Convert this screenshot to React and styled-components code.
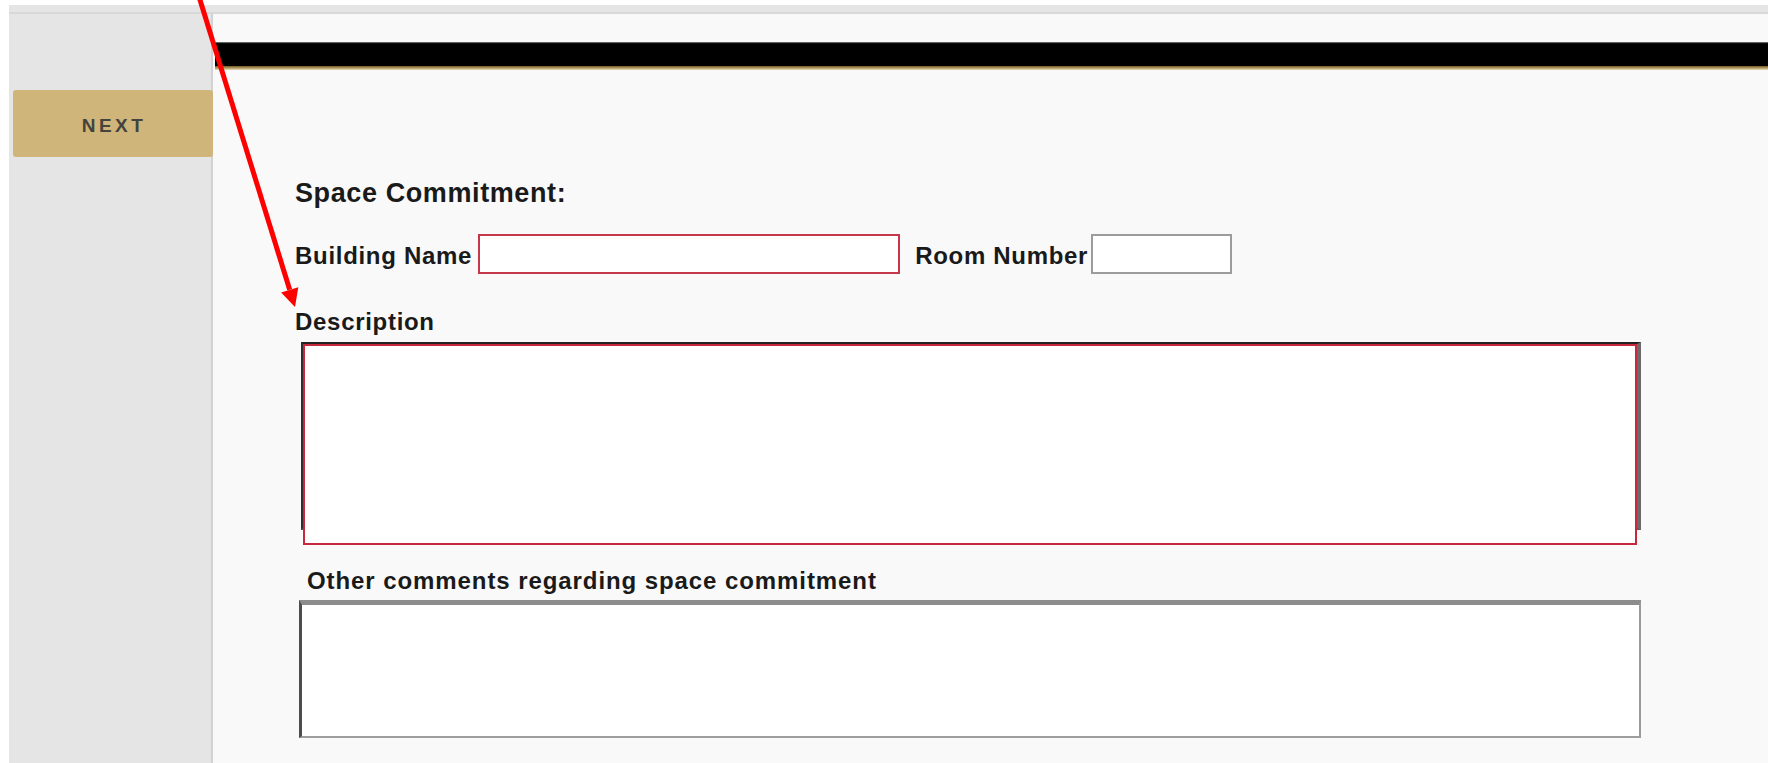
import React from 'react';
import styled, { createGlobalStyle } from 'styled-components';

const GlobalStyle = createGlobalStyle`
  html, body {
    margin: 0;
    padding: 0;
    background-color: #ffffff;
    font-family: 'Liberation Sans', Arial, sans-serif;
  }
`;

const Page = styled.div`
  position: relative;
  min-height: 763px;
  padding: 5px 0 0 9px;
  box-sizing: border-box;
  overflow: hidden;
`;

const Frame = styled.div`
  background-color: #e5e5e5;
  padding-top: 7px;
`;

const Layout = styled.div`
  display: flex;
  height: 749px;
  border-top: 2px solid #d8d8d8;
`;

const Sidebar = styled.aside`
  width: 204px;
  flex-shrink: 0;
  box-sizing: border-box;
  padding: 76px 0 0 4px;
  background-color: #e5e5e5;
  box-shadow: inset -2px 0 0 #d2d2d2;
`;

const NextButton = styled.button`
  display: flex;
  align-items: center;
  justify-content: center;
  width: 200px;
  height: 67px;
  padding: 4px 0 0 2px;
  border: none;
  border-radius: 3px;
  background-color: #cfb579;
  color: #45433e;
  font-family: 'Liberation Sans', Arial, sans-serif;
  font-size: 19px;
  font-weight: 700;
  letter-spacing: 3.4px;
  text-transform: uppercase;
  cursor: pointer;
`;

const Panel = styled.main`
  flex: 1;
  background-color: #f9f9f9;
  padding: 28px 0 0 2px;
  box-sizing: border-box;
`;

const TopBar = styled.div`
  height: 28px;
  background: linear-gradient(
    to bottom,
    #a8a8a8 0,
    #1a1a1a 1px,
    #000000 2px,
    #000000 24px,
    #6e5a2c 24px,
    #b49a5c 26px,
    #e9dfc2 28px
  );
`;

const Form = styled.form`
  display: flex;
  flex-direction: column;
  align-items: flex-start;
  padding-left: 80px;
`;

const Heading = styled.h2`
  margin: 108px 0 0;
  font-size: 27px;
  line-height: 30px;
  font-weight: 700;
  letter-spacing: 0.6px;
  color: #1a1a1a;
`;

const Label = styled.label`
  display: block;
  font-size: 24px;
  line-height: 28px;
  font-weight: 700;
  letter-spacing: ${(p) => p.$spacing || 0.7}px;
  color: #1a1a1a;
  margin: ${(p) => p.$top || 0}px 0 0 ${(p) => p.$indent || 0}px;
`;

const FieldRow = styled.div`
  display: flex;
  align-items: center;
  margin-top: 26px;

  ${Label} {
    padding-top: 4px;
  }
`;

const TextInput = styled.input`
  box-sizing: border-box;
  width: ${(p) => p.$width}px;
  height: 40px;
  margin: 0 ${(p) => p.$after || 0}px 0 ${(p) => p.$before || 0}px;
  border: 2px solid ${(p) => (p.$required ? '#c5374a' : '#9c9c9c')};
  background-color: #ffffff;
  font-size: 20px;
  outline: none;
`;

const FieldStack = styled.div`
  display: grid;
  margin: 6px 0 0 6px;
`;

const InsetFrame = styled.div`
  grid-area: 1 / 1;
  align-self: start;
  width: 1340px;
  height: 188px;
  box-sizing: border-box;
  border-top: 2px solid #222222;
  border-left: 2px solid #2e2e2e;
  border-right: 4px solid #6a6a6a;
  border-bottom: 2px solid #5a5a5a;
  background-color: #ffffff;
`;

const RequiredArea = styled.textarea`
  grid-area: 1 / 1;
  align-self: start;
  width: 1334px;
  height: 201px;
  margin: 2px 0 0 2px;
  box-sizing: border-box;
  border: 2px solid #c8283c;
  background-color: #ffffff;
  resize: none;
  outline: none;
`;

const CommentArea = styled.textarea`
  display: block;
  width: 1342px;
  height: 138px;
  margin: 5px 0 0 4px;
  box-sizing: border-box;
  border-top: 5px solid #8c8c8c;
  border-left: 3px solid #4c4c4c;
  border-right: 2px solid #9a9a9a;
  border-bottom: 2px solid #9e9e9e;
  background-color: #ffffff;
  resize: none;
  outline: none;
`;

const Pointer = styled.svg`
  position: absolute;
  top: 0;
  left: 0;
  width: 1768px;
  height: 763px;
  pointer-events: none;
`;

const App = () => {
  return (
    <>
      <GlobalStyle />
      <Page>
        <Frame>
          <Layout>
            <Sidebar>
              <NextButton type="button">Next</NextButton>
            </Sidebar>
            <Panel>
              <TopBar />
              <Form>
                <Heading>Space Commitment:</Heading>
                <FieldRow>
                  <Label>Building Name</Label>
                  <TextInput $width={422} $before={6} $after={15} $required />
                  <Label>Room Number</Label>
                  <TextInput $width={141} $before={3} />
                </FieldRow>
                <Label $top={34}>Description</Label>
                <FieldStack>
                  <InsetFrame />
                  <RequiredArea />
                </FieldStack>
                <Label $top={22} $indent={12} $spacing={0.92}>
                  Other comments regarding space commitment
                </Label>
                <CommentArea />
              </Form>
            </Panel>
          </Layout>
        </Frame>
        <Pointer viewBox="0 0 1768 763">
          <line x1="198.8" y1="-4" x2="289.7" y2="289.8" stroke="#ff0000" strokeWidth="5" />
          <polygon points="295,307 281.1,292.4 298.3,287.2" fill="#ff0000" />
        </Pointer>
      </Page>
    </>
  );
};

export default App;
